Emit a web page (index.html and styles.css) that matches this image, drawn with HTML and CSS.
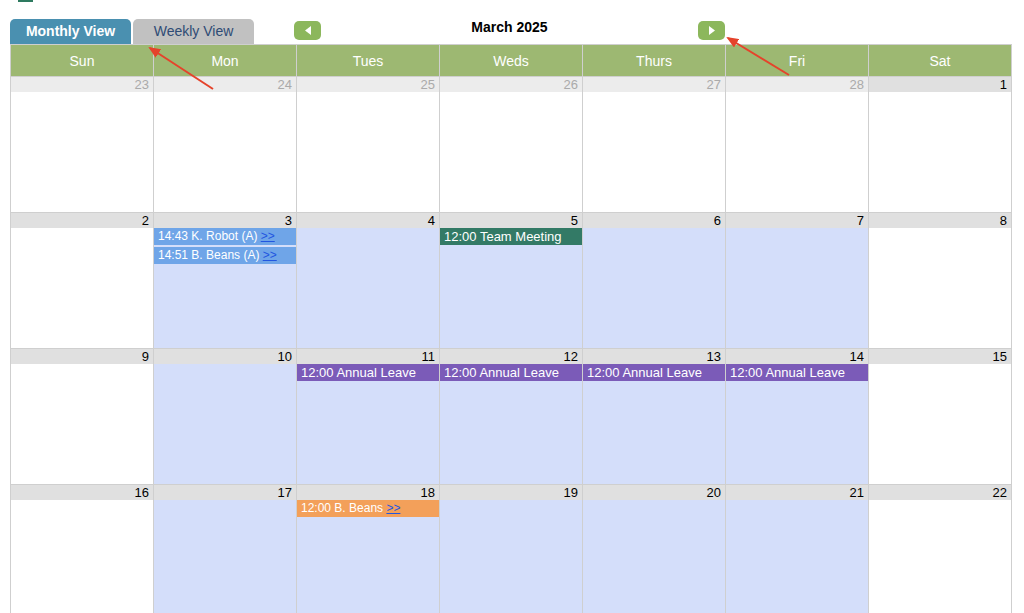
FILE: index.html
```html
<!DOCTYPE html>
<html>
<head>
    <title>Calendar</title>
    <link rel="stylesheet" href="styles.css">
</head>
<body>
    <div class="topstrip"><div class="logo-edge"></div></div>

    <div class="toolbar">
        <div class="tabs">
            <div class="tab active">Monthly View</div>
            <div class="tab">Weekly View</div>
        </div>
        <div class="month-nav">
            <button class="nav-btn" type="button">
                <svg width="6" height="9" viewBox="0 0 6 9"><path d="M6 0 L0 4.5 L6 9 Z" fill="#fff"/></svg>
            </button>
            <span class="month-title">March 2025</span>
            <button class="nav-btn" type="button">
                <svg width="6" height="9" viewBox="0 0 6 9"><path d="M0 0 L6 4.5 L0 9 Z" fill="#fff"/></svg>
            </button>
        </div>
    </div>

    <table class="calendar">
        <thead>
            <tr>
                <th>Sun</th><th>Mon</th><th>Tues</th><th>Weds</th><th>Thurs</th><th>Fri</th><th>Sat</th>
            </tr>
        </thead>
        <tbody>
            <tr>
                <td><div class="num other">23</div></td>
                <td><div class="num other">24</div></td>
                <td><div class="num other">25</div></td>
                <td><div class="num other">26</div></td>
                <td><div class="num other">27</div></td>
                <td><div class="num other">28</div></td>
                <td><div class="num">1</div></td>
            </tr>
            <tr>
                <td><div class="num">2</div></td>
                <td class="workday">
                    <div class="num">3</div>
                    <div class="event appt">14:43 K. Robot (A) <a href="#">&gt;&gt;</a></div>
                    <div class="event appt">14:51 B. Beans (A) <a href="#">&gt;&gt;</a></div>
                </td>
                <td class="workday"><div class="num">4</div></td>
                <td class="workday">
                    <div class="num">5</div>
                    <div class="event meeting">12:00 Team Meeting</div>
                </td>
                <td class="workday"><div class="num">6</div></td>
                <td class="workday"><div class="num">7</div></td>
                <td><div class="num">8</div></td>
            </tr>
            <tr>
                <td><div class="num">9</div></td>
                <td class="workday"><div class="num">10</div></td>
                <td class="workday">
                    <div class="num">11</div>
                    <div class="event leave">12:00 Annual Leave</div>
                </td>
                <td class="workday">
                    <div class="num">12</div>
                    <div class="event leave">12:00 Annual Leave</div>
                </td>
                <td class="workday">
                    <div class="num">13</div>
                    <div class="event leave">12:00 Annual Leave</div>
                </td>
                <td class="workday">
                    <div class="num">14</div>
                    <div class="event leave">12:00 Annual Leave</div>
                </td>
                <td><div class="num">15</div></td>
            </tr>
            <tr>
                <td><div class="num">16</div></td>
                <td class="workday"><div class="num">17</div></td>
                <td class="workday">
                    <div class="num">18</div>
                    <div class="event visit">12:00 B. Beans <a href="#">&gt;&gt;</a></div>
                </td>
                <td class="workday"><div class="num">19</div></td>
                <td class="workday"><div class="num">20</div></td>
                <td class="workday"><div class="num">21</div></td>
                <td><div class="num">22</div></td>
            </tr>
        </tbody>
    </table>

    <svg class="annotations" width="1024" height="613" viewBox="0 0 1024 613">
        <defs>
            <marker id="head" markerWidth="12" markerHeight="10" refX="10" refY="5" orient="auto" markerUnits="userSpaceOnUse">
                <path d="M0 0 L12 5 L0 10 Z" fill="#e5432b"/>
            </marker>
        </defs>
        <line x1="213" y1="89" x2="150" y2="48" stroke="#e5432b" stroke-width="2" marker-end="url(#head)"/>
        <line x1="789" y1="75" x2="728" y2="38" stroke="#e5432b" stroke-width="2" marker-end="url(#head)"/>
    </svg>
</body>
</html>
```

FILE: styles.css
```css
body {
    font-family: "Liberation Sans", Arial, sans-serif;
    margin: 0;
    padding: 0;
    background-color: #fff;
    color: #000;
}
.topstrip {
    height: 19px;
}
.logo-edge {
    margin-left: 18px;
    width: 15px;
    height: 2px;
    background: #2e7a60;
}
.toolbar {
    display: flex;
    align-items: flex-start;
    padding-left: 10px;
}
.tabs {
    display: flex;
    gap: 2px;
}
.tab {
    width: 121px;
    height: 25px;
    line-height: 25px;
    text-align: center;
    font-size: 14px;
    background: #c1c1c1;
    color: #2f4b75;
    border-radius: 5px 5px 0 0;
}
.tab.active {
    background: #4a90b0;
    color: #fff;
    font-weight: bold;
}
.month-nav {
    display: flex;
    justify-content: space-between;
    align-items: center;
    width: 431px;
    margin-left: 40px;
    margin-top: 2px;
}
.nav-btn {
    width: 27px;
    height: 19px;
    border: none;
    border-radius: 5px;
    background: #8cb75c;
    padding: 0;
    display: flex;
    align-items: center;
    justify-content: center;
}
.month-title {
    font-size: 14px;
    font-weight: bold;
    margin-top: -7px;
}
.calendar {
    margin-left: 10px;
    width: 1002px;
    table-layout: fixed;
    border-collapse: collapse;
}
.calendar th {
    background: #9db872;
    color: #fff;
    font-weight: normal;
    font-size: 14px;
    height: 31px;
    padding: 0;
    border: 1px solid #cfcfcf;
}
.calendar td {
    height: 135px;
    padding: 0;
    vertical-align: top;
    border: 1px solid #cfcfcf;
    background: #fff;
}
.calendar td.workday {
    background: #d4defa;
}
.num {
    height: 15px;
    line-height: 16px;
    font-size: 13px;
    text-align: right;
    padding-right: 4px;
    background: #e0e0e0;
    color: #000;
}
.num.other {
    background: #ececec;
    color: #aaa;
}
.event {
    height: 17px;
    line-height: 17px;
    margin-bottom: 2px;
    padding-left: 4px;
    color: #fff;
    font-size: 13px;
    white-space: nowrap;
    overflow: hidden;
}
.event a {
    color: #2256e0;
    text-decoration: underline;
}
.appt {
    background: #6fa5e8;
    font-size: 12px;
}
.visit {
    background: #f3a05a;
    font-size: 12px;
}
.meeting {
    background: #337a66;
}
.leave {
    background: #7b5bb8;
}
.annotations {
    position: absolute;
    left: 0;
    top: 0;
    pointer-events: none;
}
```
